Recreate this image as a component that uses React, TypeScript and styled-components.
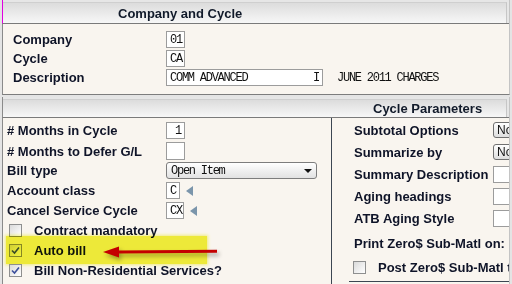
import styled, { createGlobalStyle } from "styled-components";

const GlobalStyle = createGlobalStyle`
  body {
    margin: 0;
    background: #e4e4e4;
    font-family: "Liberation Sans", Arial, sans-serif;
  }
`;

const Page = styled.div`
  width: 512px;
  height: 284px;
  overflow: hidden;
  padding: 0 2px;
  box-sizing: border-box;
`;

const Panel = styled.section<{ $gap?: number }>`
  margin-top: ${(p) => p.$gap ?? 0}px;
  border-left: 1px solid #8a8a8a;
  border-right: 1px solid #c4c4c4;
  border-bottom: 1px solid #7d7d7d;
  background: #f9f5ef;
`;

const Header = styled.header<{ $h: number; $accent?: boolean }>`
  height: ${(p) => p.$h}px;
  margin-left: -1px;
  border-left: 1px solid ${(p) => (p.$accent ? "#e000e0" : "#8a8a8a")};
  border-bottom: 1px solid #7a7a7a;
  background: #e6e6e6;
  padding: 2px 2px 0 0;
  box-sizing: content-box;
`;

const HeaderBar = styled.div<{ $indent: number }>`
  height: 100%;
  box-sizing: border-box;
  border-top: 1px solid #cfcfcf;
  border-right: 1px solid #c6c6c6;
  background: linear-gradient(#dcdcdc, #f7f7f7);
  display: flex;
  align-items: center;
  padding-left: ${(p) => p.$indent}px;
  font: bold 13px "Liberation Sans", Arial, sans-serif;
  color: #111a2a;
`;

const TopBody = styled.div`
  padding: 7px 0 8px 10px;
  display: flex;
  flex-direction: column;
  gap: 2px;
`;

const Row = styled.div<{ $label: number; $h: number }>`
  display: grid;
  grid-template-columns: ${(p) => p.$label}px auto;
  align-items: center;
  height: ${(p) => p.$h}px;
  position: relative;
`;

const Label = styled.span`
  font: bold 13px "Liberation Sans", Arial, sans-serif;
  color: #0f1428;
  white-space: nowrap;
`;

const Field = styled.div`
  display: flex;
  align-items: center;
`;

const mono = `
  font: 12px "Liberation Mono", monospace;
  letter-spacing: -1.25px;
  color: #111;
`;

const Box = styled.div<{ $w: number; $align?: string; $h?: number }>`
  width: ${(p) => p.$w}px;
  height: ${(p) => p.$h ?? 17}px;
  box-sizing: border-box;
  border: 1px solid #9c9c9c;
  background: #fff;
  padding: 0 3px;
  display: flex;
  align-items: center;
  justify-content: ${(p) => p.$align ?? "flex-start"};
  ${mono}
  white-space: pre;
  flex-shrink: 0;
`;

const Note = styled.span`
  margin-left: 14px;
  ${mono}
`;

const Lookup = styled.span`
  margin-left: 6px;
  width: 0;
  height: 0;
  border-top: 5px solid transparent;
  border-bottom: 5px solid transparent;
  border-right: 7px solid #7b95ab;
`;

const Select = styled.div`
  width: 151px;
  height: 17px;
  box-sizing: border-box;
  border: 1px solid #7d7d7d;
  border-radius: 3px;
  background: linear-gradient(#ffffff, #e2e2e2);
  display: flex;
  align-items: center;
  justify-content: space-between;
  padding: 0 4px;
  ${mono}
`;

const Caret = styled.span`
  width: 0;
  height: 0;
  border-left: 4px solid transparent;
  border-right: 4px solid transparent;
  border-top: 4px solid #111;
`;

const Body = styled.div`
  display: grid;
  grid-template-columns: 328px 1fr;
  height: 166px;
`;

const LeftCol = styled.div`
  padding: 4px 0 0 4px;
  display: flex;
  flex-direction: column;
  gap: 3px;
`;

const RightCol = styled.div`
  border-left: 1px solid #3c4652;
  padding: 1px 0 0 22px;
  overflow: hidden;
  display: flex;
  flex-direction: column;
`;

const CheckRow = styled.label<{ $h: number; $shift?: number }>`
  display: flex;
  align-items: center;
  gap: 12px;
  height: ${(p) => p.$h}px;
  margin-left: ${(p) => p.$shift ?? 2}px;
  position: relative;
`;

const Check = styled.span`
  width: 13px;
  height: 13px;
  box-sizing: border-box;
  border: 1px solid #8e8f8f;
  background: linear-gradient(135deg, #dadada, #ffffff);
  display: flex;
  align-items: center;
  justify-content: center;
  flex-shrink: 0;
`;

const Button = styled.div`
  width: 34px;
  height: 16px;
  box-sizing: border-box;
  border: 1px solid #707070;
  border-radius: 3px;
  background: linear-gradient(#ffffff, #dedede);
  padding-left: 3px;
  display: flex;
  align-items: center;
  font: 12px "Liberation Sans", Arial, sans-serif;
  color: #111;
  flex-shrink: 0;
`;

const BottomRule = styled.div`
  margin: 4px 0 0 -5px;
  border-top: 1px solid #3c4652;
`;

// annotation laid over the screenshot
const Marker = styled.span`
  position: absolute;
  left: -3px;
  top: -6px;
  width: 201px;
  height: 28px;
  background: #f3f33c;
  mix-blend-mode: multiply;
  box-shadow: 0 0 3px 1px #f6f68a;
  pointer-events: none;
`;

const Arrow = styled.svg`
  position: absolute;
  left: 93px;
  top: 1px;
  filter: drop-shadow(2px 3px 2px rgba(0, 0, 0, 0.35));
  pointer-events: none;
`;

function Tick() {
  return (
    <svg width="9" height="9" viewBox="0 0 9 9">
      <path d="M1 4.5 L3.5 7 L8 1.5" fill="none" stroke="#3c4f9c" strokeWidth="1.6" />
    </svg>
  );
}

export default function App() {
  return (
    <>
      <GlobalStyle />
      <Page>
        <Panel>
          <Header $h={21} $accent>
            <HeaderBar $indent={115}>Company and Cycle</HeaderBar>
          </Header>
          <TopBody>
            <Row $label={153} $h={17}>
              <Label>Company</Label>
              <Box $w={19}>01</Box>
            </Row>
            <Row $label={153} $h={17}>
              <Label>Cycle</Label>
              <Box $w={19}>CA</Box>
            </Row>
            <Row $label={153} $h={17}>
              <Label>Description</Label>
              <Field>
                <Box $w={157} $align="space-between">
                  <span>COMM ADVANCED</span>
                  <span>I</span>
                </Box>
                <Note>JUNE 2011 CHARGES</Note>
              </Field>
            </Row>
          </TopBody>
        </Panel>

        <Panel $gap={2}>
          <Header $h={18}>
            <HeaderBar $indent={370}>Cycle Parameters</HeaderBar>
          </Header>
          <Body>
            <LeftCol>
              <Row $label={159} $h={17}>
                <Label># Months in Cycle</Label>
                <Box $w={19} $align="flex-end">1</Box>
              </Row>
              <Row $label={159} $h={17}>
                <Label># Months to Defer G/L</Label>
                <Box $w={19} $h={18} />
              </Row>
              <Row $label={159} $h={17}>
                <Label>Bill type</Label>
                <Select>
                  Open Item
                  <Caret />
                </Select>
              </Row>
              <Row $label={159} $h={17}>
                <Label>Account class</Label>
                <Field>
                  <Box $w={14}>C</Box>
                  <Lookup />
                </Field>
              </Row>
              <Row $label={159} $h={17}>
                <Label>Cancel Service Cycle</Label>
                <Field>
                  <Box $w={18}>CX</Box>
                  <Lookup />
                </Field>
              </Row>
              <CheckRow $h={17}>
                <Check />
                <Label>Contract mandatory</Label>
              </CheckRow>
              <CheckRow $h={17}>
                <Check>
                  <Tick />
                </Check>
                <Label>Auto bill</Label>
                <Marker />
                <Arrow width="120" height="18" viewBox="0 0 120 18">
                  <path d="M16 9 L115 8.2" stroke="#c40000" strokeWidth="3" />
                  <polygon points="1,9 17,3.5 17,14.5" fill="#c40000" />
                </Arrow>
              </CheckRow>
              <CheckRow $h={17}>
                <Check>
                  <Tick />
                </Check>
                <Label>Bill Non-Residential Services?</Label>
              </CheckRow>
            </LeftCol>

            <RightCol>
              <Row $label={139} $h={22}>
                <Label>Subtotal Options</Label>
                <Button>No</Button>
              </Row>
              <Row $label={139} $h={22}>
                <Label>Summarize by</Label>
                <Button>No</Button>
              </Row>
              <Row $label={139} $h={22}>
                <Label>Summary Description</Label>
                <Box $w={40} />
              </Row>
              <Row $label={139} $h={22}>
                <Label>Aging headings</Label>
                <Box $w={40} />
              </Row>
              <Row $label={139} $h={22}>
                <Label>ATB Aging Style</Label>
                <Box $w={40} />
              </Row>
              <Row $label={200} $h={28}>
                <Label>Print Zero$ Sub-Matl on:</Label>
              </Row>
              <CheckRow $h={20} $shift={-1}>
                <Check />
                <Label>Post Zero$ Sub-Matl to G/L</Label>
              </CheckRow>
              <BottomRule />
            </RightCol>
          </Body>
        </Panel>
      </Page>
    </>
  );
}
